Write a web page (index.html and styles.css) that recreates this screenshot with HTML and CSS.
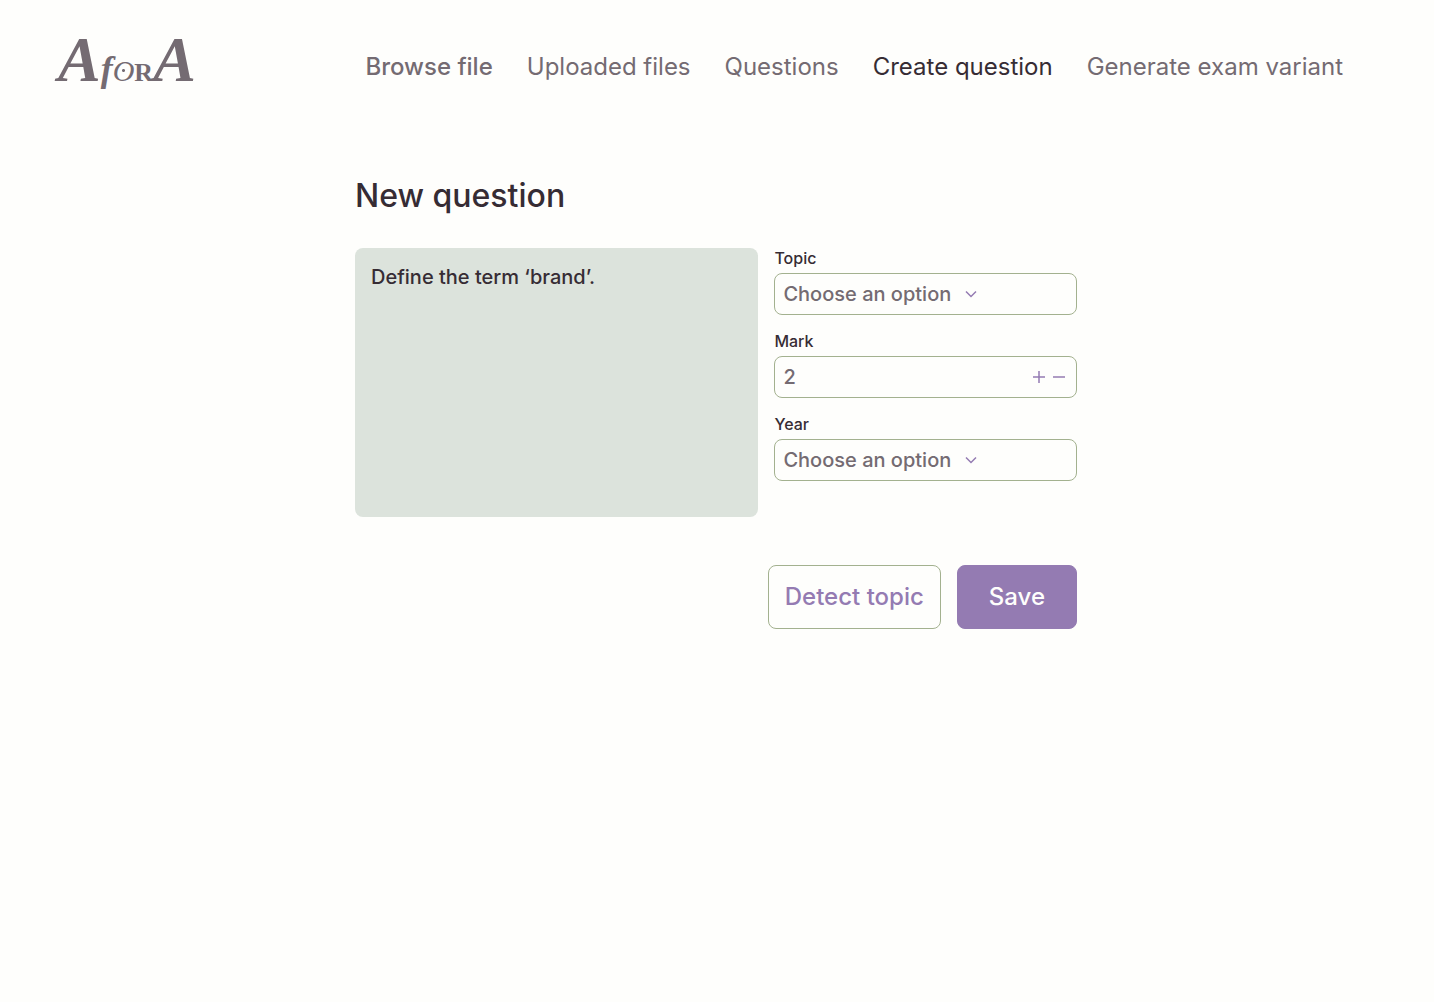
FILE: index.html
```html
<!DOCTYPE html>
<html lang="en">
<head>
<meta charset="utf-8">
<meta name="viewport" content="width=device-width, initial-scale=1">
<title>New question – A for A</title>
<link rel="stylesheet" href="styles.css">
</head>
<body>
<header class="header">
  <a class="logo" href="#" aria-label="A for A"><span class="logo-cap">A</span><span class="logo-for">f<span class="logo-o">O</span><span class="logo-r">R</span></span><span class="logo-cap">A</span></a>
  <nav class="nav">
    <a class="nav-link nav-link-strong" href="#">Browse file</a>
    <a class="nav-link" href="#">Uploaded files</a>
    <a class="nav-link" href="#">Questions</a>
    <a class="nav-link nav-link-active" href="#" aria-current="page">Create question</a>
    <a class="nav-link" href="#">Generate exam variant</a>
  </nav>
</header>
<main class="main">
  <h1 class="title">New question</h1>
  <form class="form">
    <div class="form-body">
      <textarea class="question" aria-label="Question text">Define the term ‘brand’.</textarea>
      <div class="fields">
        <div class="field">
          <label class="label" for="topic">Topic</label>
          <div class="control">
            <select class="input" id="topic"><option>Choose an option</option></select>
            <svg class="chevron" viewBox="0 0 14 14" aria-hidden="true"><path d="M2 4.500l5 5 5-5"/></svg>
          </div>
        </div>
        <div class="field">
          <label class="label" for="mark">Mark</label>
          <div class="control">
            <input class="input" id="mark" type="text" inputmode="numeric" value="2">
            <div class="stepper">
              <button class="step" type="button" aria-label="Increase"><svg class="icon" viewBox="0 0 14 14"><path d="M1 7h12M7 1v12"/></svg></button>
              <button class="step" type="button" aria-label="Decrease"><svg class="icon" viewBox="0 0 14 14"><path d="M1 7h12"/></svg></button>
            </div>
          </div>
        </div>
        <div class="field">
          <label class="label" for="year">Year</label>
          <div class="control">
            <select class="input" id="year"><option>Choose an option</option></select>
            <svg class="chevron" viewBox="0 0 14 14" aria-hidden="true"><path d="M2 4.500l5 5 5-5"/></svg>
          </div>
        </div>
      </div>
    </div>
    <div class="actions">
      <button class="button" type="button">Detect topic</button>
      <button class="button button-primary" type="submit">Save</button>
    </div>
  </form>
</main>
</body>
</html>
```

FILE: styles.css
```css
* {
  box-sizing: border-box;
}

body {
  margin: 0;
  background: #fefefc;
  color: #362c34;
  font-family: Inter, "Liberation Sans", sans-serif;
}

.header {
  display: flex;
  align-items: center;
  justify-content: space-between;
  padding: 26px 91px 26px 58px;
}

.logo {
  display: flex;
  align-items: baseline;
  color: #746b72;
  font-family: "Liberation Serif", serif;
  font-weight: 700;
  font-style: italic;
  line-height: 68px;
  text-decoration: none;
}

.logo-cap {
  font-size: 64px;
}

.logo-for {
  font-size: 36px;
}

.logo-o {
  background: radial-gradient(circle, #746b72 1px, transparent 2px);
  font-size: 30px;
  font-weight: 400;
}

.logo-r {
  font-size: 26px;
  font-style: normal;
}

.nav {
  display: flex;
  flex-wrap: wrap;
  gap: 34px;
}

.nav-link {
  color: #746b72;
  font-size: 24px;
  line-height: 32px;
  text-decoration: none;
}

.nav-link-strong {
  font-weight: 500;
}

.nav-link-active {
  color: #362c34;
}

.main {
  max-width: 724px;
  margin: 0 auto;
  padding: 43px 2px 43px 0;
}

.title {
  margin: 0 0 32px;
  font-size: 32px;
  font-weight: 500;
  line-height: 40px;
}

.form-body {
  display: grid;
  grid-template-columns: 4fr 3fr;
  gap: 16px;
}

.question {
  height: 269px;
  padding: 16px;
  border: 0;
  border-radius: 8px;
  background: #dce3dc;
  color: #362c34;
  font: 500 20px/26px Inter, "Liberation Sans", sans-serif;
  resize: none;
}

.fields {
  display: flex;
  flex-direction: column;
  gap: 16px;
  min-width: 0;
}

.field {
  display: flex;
  flex-direction: column;
  gap: 5px;
}

.label {
  font-size: 16px;
  font-weight: 500;
  line-height: 20px;
}

.control {
  position: relative;
  display: flex;
  align-items: center;
  height: 42px;
  border: 1px solid #a3b18f;
  border-radius: 8px;
}

.input {
  flex: 1;
  min-width: 0;
  height: 100%;
  padding: 0 8px;
  border: 0;
  background: transparent;
  color: #746b72;
  font: 500 20px/26px Inter, "Liberation Sans", sans-serif;
  appearance: none;
}

.chevron {
  position: absolute;
  left: 189px;
  width: 14px;
  height: 14px;
  fill: none;
  stroke: #947bb2;
  stroke-width: 1.5;
  pointer-events: none;
}

.stepper {
  display: flex;
  gap: 6px;
  padding-right: 10px;
}

.step {
  display: flex;
  padding: 0;
  border: 0;
  background: none;
}

.icon {
  width: 14px;
  height: 14px;
  fill: none;
  stroke: #947bb2;
  stroke-width: 1.5;
}

.actions {
  display: flex;
  justify-content: flex-end;
  gap: 16px;
  margin-top: 48px;
}

.button {
  padding: 15px 16px;
  border: 1px solid #a3b18f;
  border-radius: 8px;
  background: transparent;
  color: #947bb2;
  font: 500 24px/32px Inter, "Liberation Sans", sans-serif;
}

.button-primary {
  padding: 15px 31px;
  border-color: #947bb2;
  background: #947bb2;
  color: #fefefc;
}
```
